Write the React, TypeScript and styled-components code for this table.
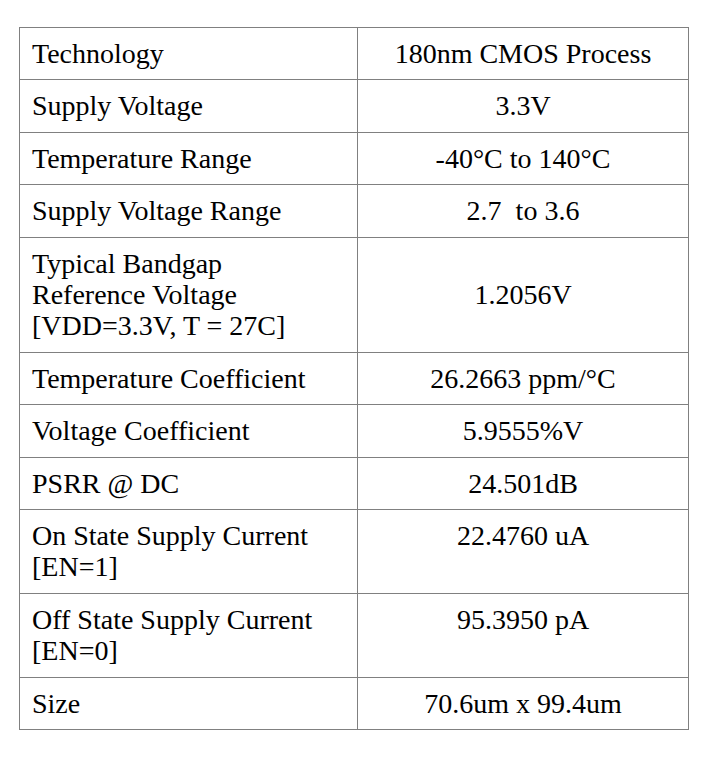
import React from "react";
import styled, { createGlobalStyle } from "styled-components";

const Global = createGlobalStyle`
  html, body { margin: 0; padding: 0; background: #ffffff; }
  body { font-family: "Liberation Serif", "Times New Roman", serif; color: #000; }
`;

const Page = styled.div`
  padding: 27px 0 0 19px;
`;

const Table = styled.table`
  border-collapse: separate;
  border-spacing: 0;
  table-layout: fixed;
  width: 670px;
  border-top: 1px solid #808080;
  border-left: 1px solid #808080;
  font-family: "Liberation Serif", "Times New Roman", serif;
  font-size: 28px;
  line-height: 31.4px;
`;

const Cell = styled.td<{ $center?: boolean; $middle?: boolean }>`
  border-right: 1px solid #808080;
  border-bottom: 1px solid #808080;
  padding: 10px ${(p) => (p.$center ? "4px" : "12px")} 10px ${(p) => (p.$center ? "4px" : "12px")};
  text-align: ${(p) => (p.$center ? "center" : "left")};
  vertical-align: ${(p) => (p.$middle ? "middle" : "top")};
  white-space: nowrap;
`;

type Row = { label: string[]; value: string; middle?: boolean };

const rows: Row[] = [
  { label: ["Technology"], value: "180nm CMOS Process" },
  { label: ["Supply Voltage"], value: "3.3V" },
  { label: ["Temperature Range"], value: "-40°C to 140°C" },
  { label: ["Supply Voltage Range"], value: "2.7\u00a0 to 3.6" },
  {
    label: ["Typical Bandgap", "Reference Voltage", "[VDD=3.3V, T = 27C]"],
    value: "1.2056V",
    middle: true,
  },
  { label: ["Temperature Coefficient"], value: "26.2663 ppm/°C" },
  { label: ["Voltage Coefficient"], value: "5.9555%V" },
  { label: ["PSRR @ DC"], value: "24.501dB" },
  { label: ["On State Supply Current", "[EN=1]"], value: "22.4760 uA" },
  { label: ["Off State Supply Current", "[EN=0]"], value: "95.3950 pA" },
  { label: ["Size"], value: "70.6um x 99.4um" },
];

export default function App() {
  return (
    <>
      <Global />
      <Page>
        <Table>
          <colgroup>
            <col style={{ width: 338 }} />
            <col style={{ width: 331 }} />
          </colgroup>
          <tbody>
            {rows.map((r, i) => (
              <tr key={i}>
                <Cell>
                  {r.label.map((l, j) => (
                    <React.Fragment key={j}>
                      {j > 0 && <br />}
                      {l}
                    </React.Fragment>
                  ))}
                </Cell>
                <Cell $center $middle={r.middle}>
                  {r.value}
                </Cell>
              </tr>
            ))}
          </tbody>
        </Table>
      </Page>
    </>
  );
}
